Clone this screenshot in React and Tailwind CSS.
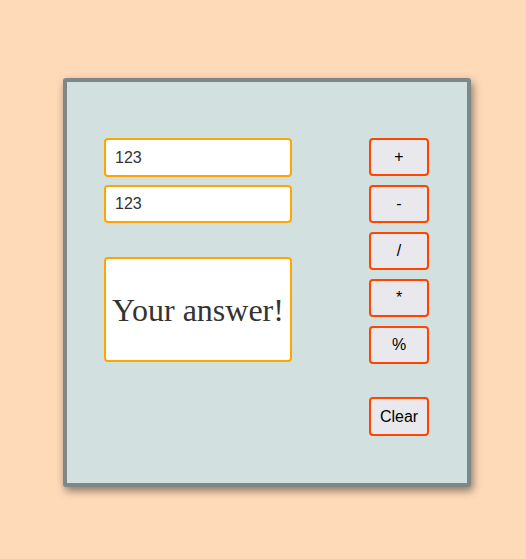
import React, { useState } from 'react';

const OPS = ['+', '-', '/', '*', '%'];

export default function App() {
  const [a, setA] = useState('123');
  const [b, setB] = useState('123');
  const [answer, setAnswer] = useState('Your answer!');

  const calc = (op) => {
    const x = parseFloat(a);
    const y = parseFloat(b);
    if (op === '+') setAnswer(String(x + y));
    if (op === '-') setAnswer(String(x - y));
    if (op === '/') setAnswer(String(x / y));
    if (op === '*') setAnswer(String(x * y));
    if (op === '%') setAnswer(String(x % y));
  };

  return (
    <div className="min-h-screen bg-[#ffdab9] pt-[78px] pl-[63px]">
      <div className="w-[408px] h-[409px] border-4 border-[#7f8787] rounded-[3px] bg-[#d3e0e0] shadow-[2px_4px_8px_rgba(0,0,0,0.45)] flex justify-between pl-[37px] pr-[38px] pt-[56px]">
        {/* inputs + answer */}
        <div className="w-[188px] flex flex-col">
          <input
            value={a}
            onChange={(e) => setA(e.target.value)}
            className="h-[39px] border-2 border-[#ffa500] rounded-[4px] bg-white px-[9px] text-[16px] text-[#333] outline-none font-['Liberation_Sans',sans-serif]"
          />
          <input
            value={b}
            onChange={(e) => setB(e.target.value)}
            className="mt-[8px] h-[38px] border-2 border-[#ffa500] rounded-[4px] bg-white px-[9px] text-[16px] text-[#333] outline-none font-['Liberation_Sans',sans-serif]"
          />
          <div className="mt-[34px] h-[105px] border-2 border-[#ffa500] rounded-[4px] bg-white flex items-center justify-center text-[32px] text-[#333] font-['Liberation_Serif',serif] whitespace-nowrap">
            {answer}
          </div>
        </div>
        {/* operator buttons */}
        <div className="w-[60px] flex flex-col">
          {OPS.map((op, i) => (
            <button
              key={op}
              onClick={() => calc(op)}
              className={`h-[38px] border-2 border-[#ff4500] rounded-[4px] bg-[#e9e9ed] text-[16px] text-black font-['Liberation_Sans',sans-serif] ${i > 0 ? 'mt-[9px]' : ''}`}
            >
              {op}
            </button>
          ))}
          <button
            onClick={() => setAnswer('Your answer!')}
            className="mt-[33px] h-[39px] border-2 border-[#ff4500] rounded-[4px] bg-[#e9e9ed] text-[16px] text-black font-['Liberation_Sans',sans-serif]"
          >
            Clear
          </button>
        </div>
      </div>
    </div>
  );
}
